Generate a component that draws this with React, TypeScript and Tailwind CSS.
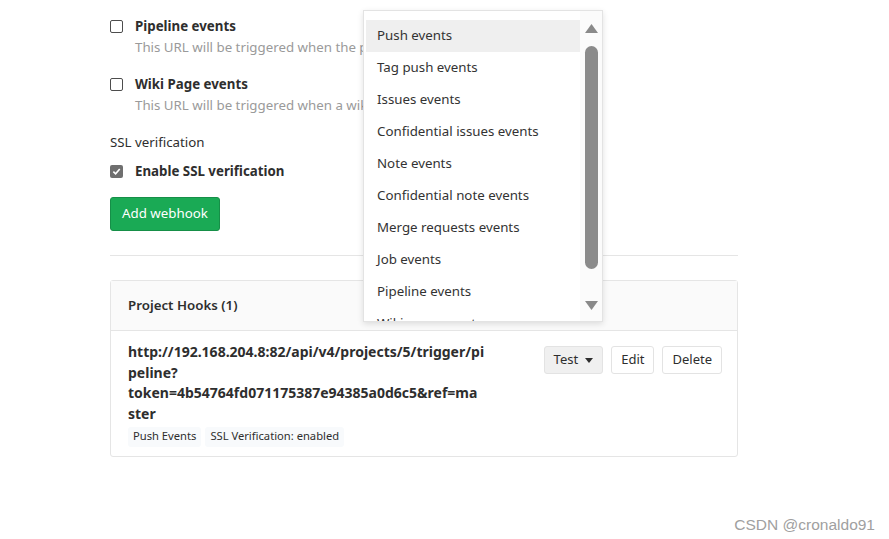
import React from 'react';

const font = { fontFamily: '"Noto Sans", "Open Sans", Arial, sans-serif' };

const events = [
  'Push events',
  'Tag push events',
  'Issues events',
  'Confidential issues events',
  'Note events',
  'Confidential note events',
  'Merge requests events',
  'Job events',
  'Pipeline events',
  'Wiki page events',
];

const Checkbox = ({ checked }: { checked?: boolean }) =>
  checked ? (
    <span className="w-[13px] h-[13px] rounded-[2px] bg-[#6f6f6f] flex items-center justify-center shrink-0">
      <svg width="9" height="9" viewBox="0 0 10 10">
        <path d="M1.5 5.2 L4 7.6 L8.6 2.2" stroke="white" strokeWidth="1.8" fill="none" />
      </svg>
    </span>
  ) : (
    <span className="w-[13px] h-[13px] rounded-[2px] border border-[#4d4d4d] bg-white shrink-0" />
  );

const EventOption = ({ label, help }: { label: string; help: string }) => (
  <div>
    <label className="flex items-center h-[21px] gap-[12px]">
      <Checkbox />
      <span className="text-[13.3px] font-bold text-[#2e2e2e] leading-[21px]">{label}</span>
    </label>
    <p className="pl-[25px] text-[13.3px] leading-[21px] text-[#9a9a9a] whitespace-nowrap">{help}</p>
  </div>
);

const Dropdown = () => (
  <div className="absolute left-[363px] top-[10px] w-[240px] h-[312px] bg-white border border-[#e3e3e3] shadow-[0_2px_6px_rgba(0,0,0,0.12)] flex overflow-hidden">
    <ul className="flex-1 pt-[9px] pl-[2px] overflow-hidden">
      {events.map((e, i) => (
        <li
          key={e}
          className={`h-[32px] flex items-center pl-[11px] text-[13.3px] text-[#333] whitespace-nowrap ${i === 0 ? 'bg-[#efefef]' : ''}`}
        >
          {e}
        </li>
      ))}
    </ul>
    <div className="w-[22px] bg-[#fbfbfb] flex flex-col items-center pt-[13px]">
      <svg width="13" height="9" viewBox="0 0 13 9">
        <path d="M6.5 0 L13 9 L0 9 Z" fill="#8a8a8a" />
      </svg>
      <div className="w-[13px] h-[223px] rounded-full bg-[#8b8b8b] mt-[13px]" />
      <svg width="13" height="9" viewBox="0 0 13 9" className="mt-[32px]">
        <path d="M0 0 L13 0 L6.5 9 Z" fill="#8a8a8a" />
      </svg>
    </div>
  </div>
);

const SmallButton = ({ children, grey }: { children: React.ReactNode; grey?: boolean }) => (
  <button
    className={`h-[28px] px-[9px] rounded-[3px] border text-[13px] text-[#2e2e2e] flex items-center gap-[7px] ${
      grey ? 'bg-[#f0f0f0] border-[#e3e3e3]' : 'bg-white border-[#e3e3e3]'
    }`}
  >
    {children}
  </button>
);

export default function App() {
  return (
    <div className="relative w-[889px] h-[539px] bg-white overflow-hidden" style={font}>
      <div className="ml-[110px] w-[628px] pt-[16px]">
        <div className="flex flex-col gap-[16px]">
          <EventOption label="Pipeline events" help="This URL will be triggered when the pipeline status changes" />
          <EventOption label="Wiki Page events" help="This URL will be triggered when a wiki page is created/updated" />
          <p className="text-[13.3px] leading-[21px] text-[#2e2e2e]">SSL verification</p>
        </div>
        <label className="flex items-center h-[21px] gap-[12px] mt-[8px]">
          <Checkbox checked />
          <span className="text-[13.3px] font-bold text-[#2e2e2e] leading-[21px]">Enable SSL verification</span>
        </label>
        <button className="mt-[15px] h-[34px] px-[11px] rounded-[3px] bg-[#1aaa55] border border-[#168f48] text-white text-[13.3px]">
          Add webhook
        </button>
        <hr className="mt-[24px] border-t border-[#e5e5e5]" />
        <div className="mt-[24px] border border-[#e5e5e5] rounded-[3px]">
          <div className="h-[50px] bg-[#fafafa] border-b border-[#e5e5e5] flex items-center px-[17px]">
            <span className="text-[13.3px] font-semibold text-[#2e2e2e]">Project Hooks (1)</span>
          </div>
          <div className="flex justify-between pl-[17px] pr-[15px] pt-[11px] pb-[9px]">
            <div>
              <p className="text-[14px] font-bold leading-[20.7px] text-[#2e2e2e] whitespace-nowrap">
                http://192.168.204.8:82/api/v4/projects/5/trigger/pi
                <br />
                peline?
                <br />
                token=4b54764fd071175387e94385a0d6c5&amp;ref=ma
                <br />
                ster
              </p>
              <div className="flex gap-[4px] mt-[2px]">
                <span className="bg-[#f8fafc] rounded-[3px] px-[5px] h-[20px] flex items-center text-[11.2px] text-[#2e2e2e]">Push Events</span>
                <span className="bg-[#f8fafc] rounded-[3px] px-[5px] h-[20px] flex items-center text-[11.2px] text-[#2e2e2e]">SSL Verification: enabled</span>
              </div>
            </div>
            <div className="flex gap-[8px] pt-[4px] items-start">
              <SmallButton grey>
                Test
                <svg width="8" height="5" viewBox="0 0 8 5">
                  <path d="M0 0 L8 0 L4 5 Z" fill="#2e2e2e" />
                </svg>
              </SmallButton>
              <SmallButton>Edit</SmallButton>
              <SmallButton>Delete</SmallButton>
            </div>
          </div>
        </div>
      </div>
      <Dropdown />
      <div className="absolute right-[14px] top-[513px] text-[15.5px] text-[#a0a0a0]" style={{ fontFamily: '"Liberation Sans", Arial, sans-serif' }}>
        CSDN @cronaldo91
      </div>
    </div>
  );
}
